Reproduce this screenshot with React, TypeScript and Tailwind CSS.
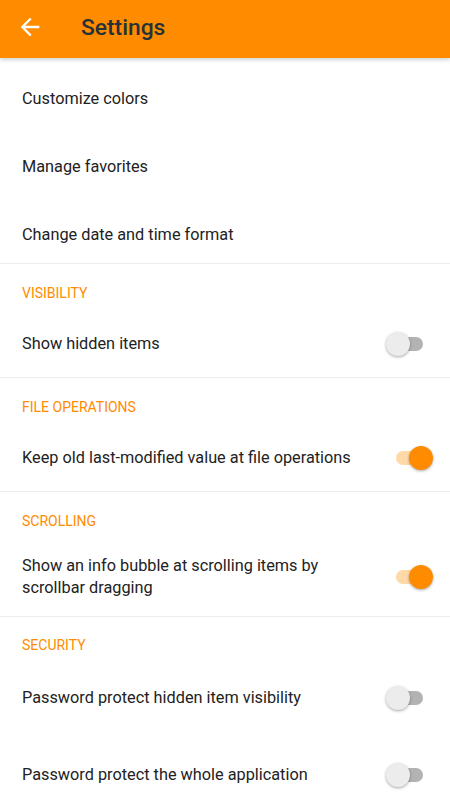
import React from "react";

const ORANGE = "#ff8c00";

interface SwitchProps {
  on: boolean;
}

const Switch: React.FC<SwitchProps> = ({ on }) => {
  return (
    <div className={`relative flex items-center shrink-0 ${on ? "mr-[20px]" : "mr-[27px]"}`}>
      <div
        className={`w-[34px] h-[14px] rounded-full ${on ? "bg-[#ffd9a8]" : "bg-[#b3b3b3]"}`}
      />
      <div
        className={`absolute top-1/2 -translate-y-1/2 w-6 h-6 rounded-full shadow-[0_1px_3px_rgba(0,0,0,0.35)] ${
          on ? "right-[-3px] bg-[#ff8c00]" : "left-[-3px] bg-[#ececec]"
        }`}
      />
    </div>
  );
};

const SectionTitle: React.FC<{ label: string }> = ({ label }) => (
  <div className="h-[46px] pt-[21px] pl-[22px]">
    <p className="text-[14px] leading-[16px] text-[#ff8c00]">{label}</p>
  </div>
);

const Divider = () => <div className="h-px bg-[#ececec]" />;

interface RowProps {
  label: React.ReactNode;
  height: string;
  toggle?: boolean;
  on?: boolean;
}

const Row: React.FC<RowProps> = ({ label, height, toggle, on }) => (
  <div className={`flex items-center justify-between pl-[22px] ${height}`}>
    <p className="text-[16.3px] leading-[22px] text-[#222222] pr-6">{label}</p>
    {toggle && <Switch on={!!on} />}
  </div>
);

export default function App() {
  return (
    <div
      className="w-[450px] h-[800px] bg-white overflow-hidden"
      style={{ fontFamily: "Roboto, 'Liberation Sans', sans-serif" }}
    >
      <header
        className="relative h-[58px] flex items-center shadow-[0_2px_4px_rgba(0,0,0,0.18)] z-10"
        style={{ backgroundColor: ORANGE }}
      >
        <svg
          className="ml-[16px] -mt-[4px]"
          width="28"
          height="28"
          viewBox="0 0 24 24"
          fill="white"
        >
          <path d="M20 11H7.83l5.59-5.59L12 4l-8 8 8 8 1.41-1.41L7.83 13H20v-2z" />
        </svg>
        <h1 className="ml-[37px] -mt-[1px] text-[22.8px] font-medium text-[#263238]">
          Settings
        </h1>
      </header>

      <div className="pt-[7px]">
        <Row label="Customize colors" height="h-[68px]" />
        <Row label="Manage favorites" height="h-[68px]" />
        <div className="h-[62px] pl-[22px] pt-[23px]">
          <p className="text-[16.3px] leading-[22px] text-[#222222]">
            Change date and time format
          </p>
        </div>
      </div>
      <Divider />

      <SectionTitle label="VISIBILITY" />
      <Row label="Show hidden items" height="h-[67px]" toggle />
      <Divider />

      <SectionTitle label="FILE OPERATIONS" />
      <Row
        label="Keep old last-modified value at file operations"
        height="h-[67px]"
        toggle
        on
      />
      <Divider />

      <SectionTitle label="SCROLLING" />
      <Row
        label={
          <>
            Show an info bubble at scrolling items by
            <br />
            scrollbar dragging
          </>
        }
        height="h-[78px]"
        toggle
        on
      />
      <Divider />

      <div className="h-[42px] pt-[20px] pl-[22px]">
        <p className="text-[14px] leading-[16px] text-[#ff8c00]">SECURITY</p>
      </div>
      <Row
        label="Password protect hidden item visibility"
        height="h-[77px]"
        toggle
      />
      <Row
        label="Password protect the whole application"
        height="h-[77px]"
        toggle
      />
    </div>
  );
}
